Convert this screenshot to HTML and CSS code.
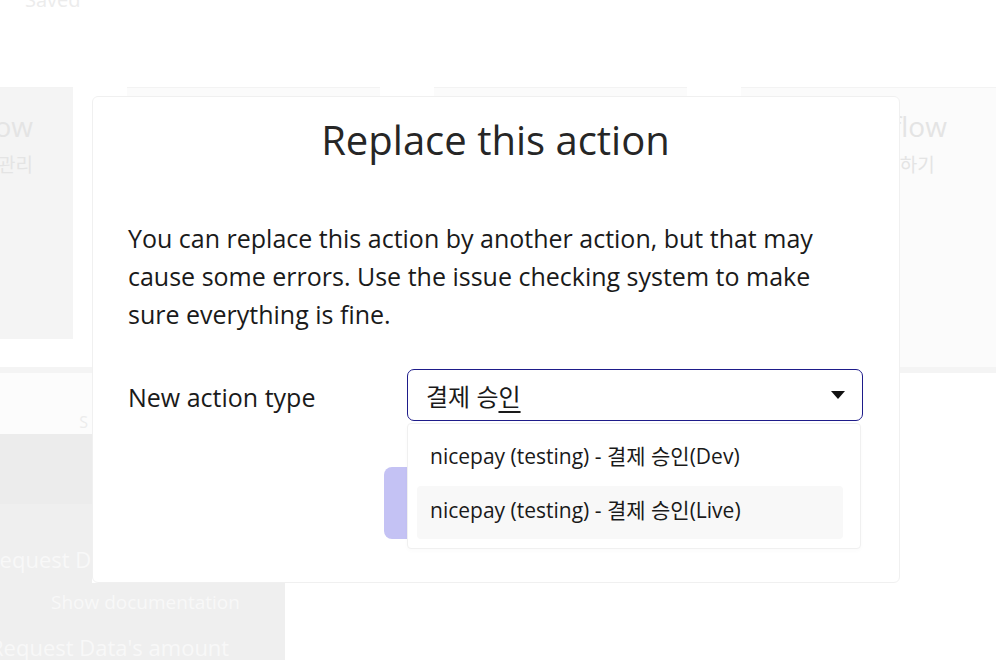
FILE: index.html
```html
<!DOCTYPE html>
<html lang="en">
<head>
<meta charset="utf-8">
<title>Replace this action</title>
<link rel="stylesheet" href="styles.css">
</head>
<body>
<div class="page">
  <div class="topbar"><span class="saved">Saved</span></div>
  <div class="cards">
    <div class="card card-gray"><div class="card-title">Workflow</div><div class="card-sub">결제 관리</div></div>
    <div class="card"><div class="card-title">Workflow</div><div class="card-sub">결제 관리</div></div>
    <div class="card"><div class="card-title">Workflow</div><div class="card-sub">결제 관리</div></div>
    <div class="card card-right"><div class="card-title">Workflow</div><div class="card-sub">결제 승인하기</div></div>
  </div>
  <div class="band"></div>
  <div class="lower">
    <div class="sidebar">
      <div class="side-head"><span class="side-s">S</span></div>
      <div class="side-dark"></div>
      <div class="side-light"><span class="side-text">Request Data</span></div>
    </div>
  </div>
  <div class="doc-block">
    <div class="doc-link">Show documentation</div>
    <div class="doc-text">Request Data's amount</div>
  </div>
</div>

<div class="modal">
  <h1 class="modal-title">Replace this action</h1>
  <p class="modal-text">You can replace this action by another action, but that may cause some errors. Use the issue checking system to make sure everything is fine.</p>
  <div class="field-row">
    <div class="field-label">New action type</div>
    <div class="select-wrap">
      <div class="select">
        <span class="select-value">결제 승<span class="ime">인</span></span>
        <span class="caret"></span>
      </div>
      <div class="menu">
        <div class="menu-item">nicepay (testing) - 결제 승인(Dev)</div>
        <div class="menu-item active">nicepay (testing) - 결제 승인(Live)</div>
      </div>
    </div>
  </div>
  <div class="actions">
    <button class="btn-primary">Replace</button>
  </div>
</div>
</body>
</html>
```

FILE: styles.css
```css
* { box-sizing: border-box; }
html, body {
  margin: 0;
  padding: 0;
  background: #ffffff;
  font-family: "Open Sans", "Noto Sans CJK KR", sans-serif;
  width: 996px;
  height: 660px;
  overflow: hidden;
}
.page {
  width: 996px;
  height: 660px;
  display: flex;
  flex-direction: column;
  overflow: hidden;
}
.topbar {
  height: 87px;
  padding-left: 25px;
}
.saved {
  display: block;
  margin-top: -14px;
  font-size: 20px;
  color: #ececec;
}
.cards {
  display: flex;
  gap: 54px;
  margin-left: -180px;
  height: 280px;
}
.card {
  flex: 0 0 253px;
  height: 280px;
  background: #fbfbfb;
  border-top: 1px solid #f3f3f3;
  text-align: right;
  padding: 20px 40px 0 0;
}
.card-gray {
  background: #f4f4f4;
  height: 252px;
}
.card-right {
  flex-basis: 256px;
  text-align: left;
}
.card-right .card-title { margin-left: 82px; }
.card-right .card-sub { margin-left: 84px; }
.card-title {
  font-size: 28px;
  color: #e4e4e4;
  line-height: 36px;
}
.card-sub {
  font-size: 19px;
  color: #e4e4e4;
  margin-top: 6px;
}
.band {
  height: 6px;
  background: #f4f4f4;
}
.lower {
  flex: 1;
  display: flex;
}
.sidebar {
  width: 92px;
  display: flex;
  flex-direction: column;
}
.side-head {
  height: 61px;
  background: #fcfcfc;
  text-align: right;
}
.side-s {
  display: inline-block;
  margin-top: 38px;
  margin-right: 4px;
  font-size: 16px;
  color: #ececec;
}
.side-dark {
  height: 70px;
  background: #ececec;
}
.side-light {
  flex: 1;
  background: #efefef;
  overflow: hidden;
  white-space: nowrap;
}
.side-text {
  display: block;
  margin-top: 40px;
  margin-left: -14px;
  font-size: 22px;
  color: #f8f8f8;
}
.doc-block {
  position: absolute;
  left: 0;
  top: 583px;
  width: 285px;
  height: 77px;
  background: #efefef;
  overflow: hidden;
  white-space: nowrap;
}
.doc-link {
  font-size: 19px;
  color: #f8f8f8;
  margin-top: 6px;
  margin-left: 51px;
}
.doc-text {
  font-size: 22px;
  color: #f8f8f8;
  margin-top: 17px;
  margin-left: -10px;
}

/* Modal */
.modal {
  position: fixed;
  left: 92px;
  top: 96px;
  width: 808px;
  height: 487px;
  background: #ffffff;
  border: 1px solid #f0f0f0;
  border-radius: 6px;
  padding: 17px 36px 0 35px;
  color: #1c1c1c;
}
.modal-title {
  margin: 0;
  font-weight: 400;
  font-size: 40px;
  line-height: 52px;
  text-align: center;
  color: #262626;
}
.modal-text {
  margin: 53px 0 0 0;
  font-size: 25px;
  line-height: 38px;
  color: #1a1a1a;
}
.field-row {
  margin-top: 36px;
  display: flex;
  align-items: center;
}
.field-label {
  width: 279px;
  font-size: 25px;
  color: #1a1a1a;
  padding-top: 3px;
}
.select-wrap {
  position: relative;
  width: 456px;
}
.select {
  height: 52px;
  border: 1px solid #1e1c8a;
  border-radius: 7px;
  display: flex;
  align-items: center;
  justify-content: space-between;
  padding: 0 17px 0 18px;
  font-size: 24px;
  color: #1a1a1a;
}
.ime {
  text-decoration: underline;
  text-underline-offset: 5px;
  text-decoration-thickness: 2px;
}
.caret {
  width: 0;
  height: 0;
  border-left: 7px solid transparent;
  border-right: 7px solid transparent;
  border-top: 8px solid #111111;
}
.menu {
  position: absolute;
  left: 0;
  top: 54px;
  width: 454px;
  height: 126px;
  background: #ffffff;
  border: 1px solid #f0f0f0;
  border-radius: 4px;
  padding: 9px 17px 0 9px;
  z-index: 2;
  box-shadow: 0 2px 4px rgba(0,0,0,0.02);
}
.menu-item {
  height: 53px;
  line-height: 46px;
  padding-left: 13px;
  font-size: 21px;
  color: #1a1a1a;
  border-radius: 4px;
}
.menu-item.active {
  background: #f8f8f8;
  line-height: 48px;
}
.actions {
  margin-top: 46px;
  display: flex;
  justify-content: center;
}
.btn-primary {
  width: 224px;
  height: 72px;
  border: none;
  border-radius: 8px;
  background: #c4c2f4;
  color: #ffffff;
  font-family: "Open Sans", sans-serif;
  font-size: 22px;
}
```
